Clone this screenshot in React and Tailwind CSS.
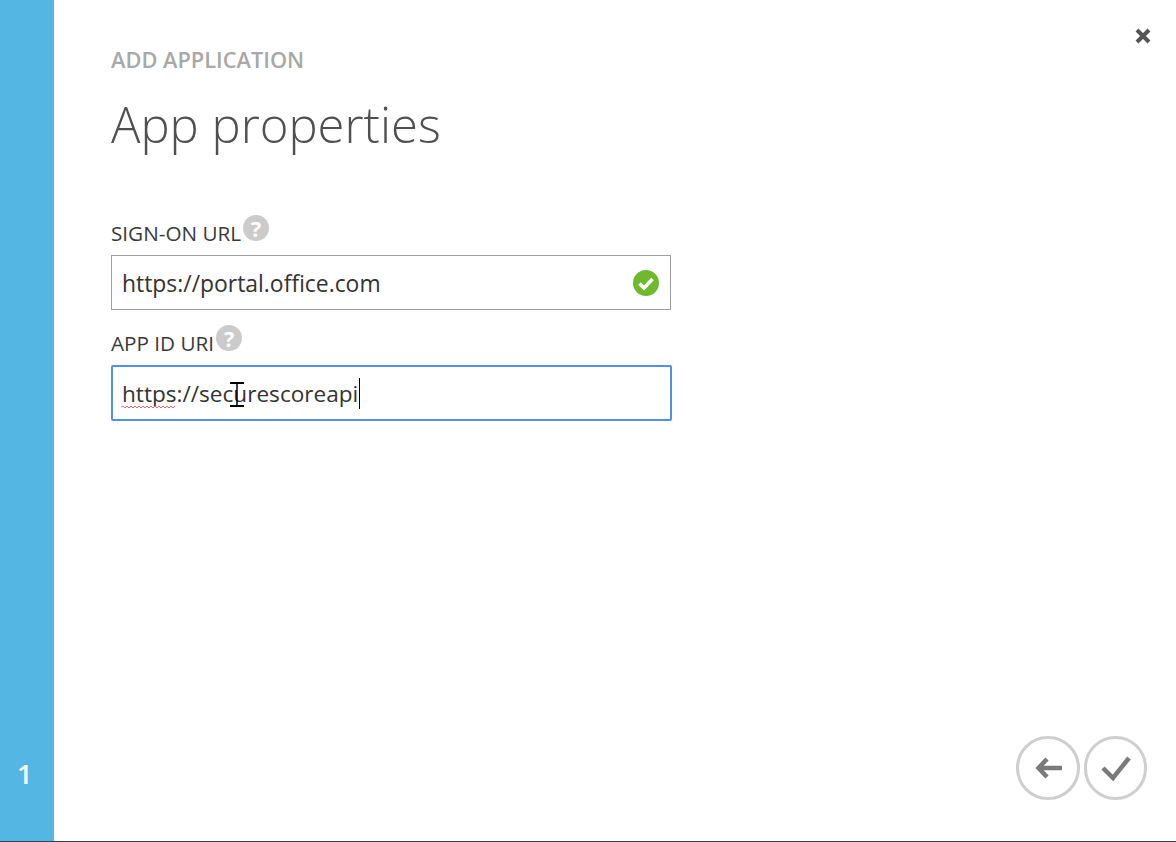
const font = { fontFamily: '"Open Sans", "Noto Sans", sans-serif' }

function HelpIcon() {
  return (
    <span className="ml-[2px] flex h-[26px] w-[26px] items-center justify-center rounded-full bg-[#cbcbcb] text-[22px] leading-none font-bold text-white">
      ?
    </span>
  )
}

function Label({ children }) {
  return (
    <div className="flex h-[40px] items-start">
      <span className="mt-[3px] text-[20.7px] leading-[30px] text-[#3a3a3a]">{children}</span>
      <HelpIcon />
    </div>
  )
}

export default function App() {
  return (
    <div className="flex h-[842px] w-[1176px] flex-col overflow-hidden bg-white" style={font}>
      <div className="flex min-h-0 flex-1">
        <aside className="flex w-[54px] shrink-0 flex-col justify-end bg-[#53b6e3] pb-[48px] pl-[17px]">
          <span className="text-[27px] leading-[38px] font-semibold text-white">1</span>
        </aside>

        <main className="relative flex flex-1 flex-col pt-[44px] pr-[29px] pb-[41px] pl-[57px]">
          <button className="absolute top-[26px] right-[23px] text-[#555]">
            <svg width="20" height="20" viewBox="0 0 20 20">
              <path d="M4 4 16 16M16 4 4 16" stroke="currentColor" strokeWidth="4" />
            </svg>
          </button>

          <p className="text-[21.8px] leading-[32px] font-semibold text-[#a8a8a8]">ADD APPLICATION</p>
          <h1 className="mt-[13px] text-[49px] leading-[70px] font-light text-[#505050]">App properties</h1>

          <div className="mt-[56px] w-[560px]">
            <Label>SIGN-ON URL</Label>
            <div className="flex h-[55px] items-center justify-between border border-[#a0a0a0] pr-[10px] pl-[10px] text-[22.9px] text-[#333]">
              <span className="pt-[4px]">https://portal.office.com</span>
              <svg width="28" height="28" viewBox="0 0 28 28">
                <circle cx="14" cy="14" r="13" fill="#6fb92c" />
                <path d="M7.5 14.5 12 19 20.5 10" fill="none" stroke="#fff" strokeWidth="3.5" />
              </svg>
            </div>

            <div className="mt-[15px]">
              <Label>APP ID URI</Label>
            </div>
            <div className="relative flex h-[56px] w-[561px] items-center rounded-[2px] border-2 border-[#4f8fef] pl-[9px] text-[22.6px] text-[#333]">
              <span className="pt-[2px]">https://securescoreapi</span>
              <span className="ml-px h-[31px] w-px bg-black" />
              <svg className="absolute top-[38px] left-[8px]" width="56" height="4" viewBox="0 0 56 4">
                <path d="M0 2 2 1 4 3 6 1 8 3 10 1 12 3 14 1 16 3 18 1 20 3 22 1 24 3 26 1 28 3 30 1 32 3 34 1 36 3 38 1 40 3 42 1 44 3 46 1 48 3 50 1 52 3 54 1" fill="none" stroke="#e86a6a" strokeWidth="1" />
              </svg>
              <svg className="absolute top-[15px] left-[117px]" width="14" height="25" viewBox="0 0 14 25">
                <path d="M0 1H14M0 24H14" stroke="#000" strokeWidth="2" />
                <path d="M7 1V24" stroke="#000" strokeWidth="1.5" />
              </svg>
            </div>
          </div>

          <div className="mt-auto flex justify-end gap-[4px]">
            <button className="flex h-[64px] w-[64px] items-center justify-center rounded-full border-[3px] border-[#cfcfcf] text-[#7a7a7a]">
              <svg width="28" height="24" viewBox="0 0 28 24">
                <path d="M28 12H5M13 3 4.5 12 13 21" fill="none" stroke="currentColor" strokeWidth="4.5" />
              </svg>
            </button>
            <button className="flex h-[64px] w-[63px] items-center justify-center rounded-full border-[3px] border-[#cfcfcf] text-[#7a7a7a]">
              <svg width="30" height="27" viewBox="0 0 30 27">
                <path d="M2 13 12 23 28 3" fill="none" stroke="currentColor" strokeWidth="4.5" />
              </svg>
            </button>
          </div>
        </main>
      </div>
      <div className="h-px shrink-0 bg-[#3a3f44]" />
    </div>
  )
}
